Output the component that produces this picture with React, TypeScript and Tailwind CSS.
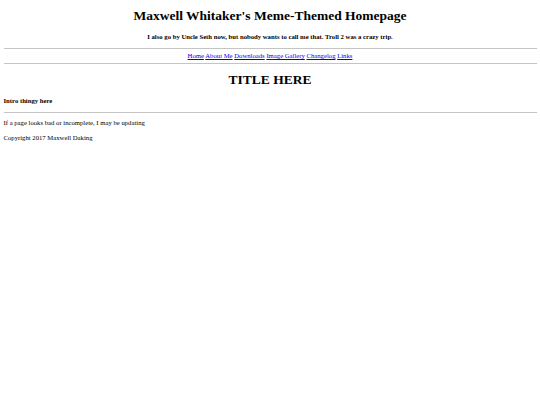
import React from 'react';

const links = ['Home', 'About Me', 'Downloads', 'Image Gallery', 'Changelog', 'Links'];

export default function App() {
  return (
    <div className="min-h-[405px] bg-white px-[3.5px] pt-[8px] font-['Liberation_Serif',serif] text-black">
      <h1 className="text-center text-[13.5px] font-bold leading-[16px]">
        Maxwell Whitaker's Meme-Themed Homepage
      </h1>

      <h4 className="mt-[9px] text-center text-[6.7px] font-bold leading-[8px]">
        I also go by Uncle Seth now, but nobody wants to call me that. Troll 2 was a crazy trip.
      </h4>

      <hr className="mt-[7px] border-t border-[#c4c4c4]" />

      <nav className="mt-[3px] text-center text-[6.7px] leading-[8px]">
        {links.map((label, i) => (
          <React.Fragment key={label}>
            <a href="#" className="text-[#0000ee] underline">
              {label}
            </a>
            {i < links.length - 1 ? ' ' : ''}
          </React.Fragment>
        ))}
      </nav>

      <hr className="mt-[3px] border-t border-[#c4c4c4]" />

      <h1 className="mt-[8px] text-center text-[13.5px] font-bold leading-[16px]">TITLE HERE</h1>

      <h4 className="mt-[9px] text-[6.7px] font-bold leading-[8px]">Intro thingy here</h4>

      <hr className="mt-[7px] border-t border-[#c4c4c4]" />

      <p className="mt-[6px] text-[6.7px] leading-[8px]">If a page looks bad or incomplete, I may be updating</p>
      <p className="mt-[7px] text-[6.7px] leading-[8px]">Copyright 2017 Maxwell Daking</p>
    </div>
  );
}
